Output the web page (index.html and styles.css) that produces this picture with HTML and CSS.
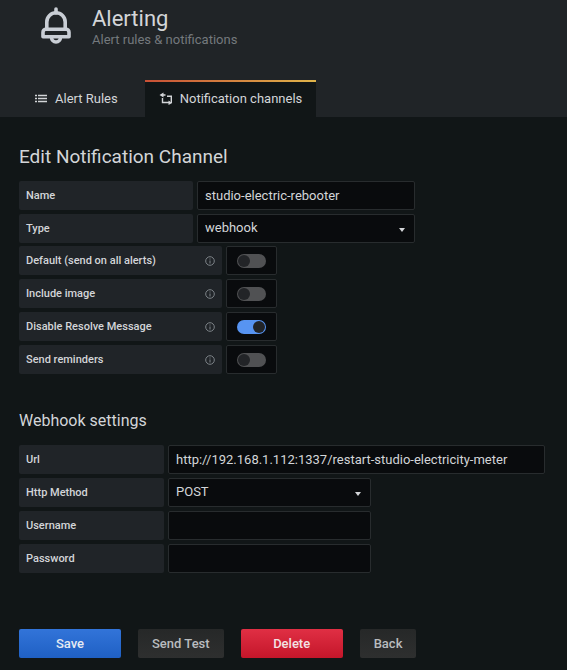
FILE: index.html
```html
<!DOCTYPE html>
<html lang="en">
<head>
    <meta charset="UTF-8">
    <meta name="viewport" content="width=device-width, initial-scale=1.0">
    <title>Alerting</title>
    <link rel="stylesheet" href="styles.css">
</head>
<body>
    <header class="page-header">
        <div class="page-title">
            <svg class="page-icon" viewBox="0 0 30 38" fill="none" stroke="currentColor" stroke-width="3.600" stroke-linejoin="round">
                <path d="M15 3v4" stroke-linecap="round"/>
                <path d="M5.800 23v-7a9.200 9.200 0 0 1 18.400 0v7"/>
                <path d="M5 23.200h20a3 3 0 0 1 3 3v4.600H2v-4.600a3 3 0 0 1 3-3z"/>
                <path d="M10.500 31a4.500 5 0 0 0 9 0"/>
            </svg>
            <div>
                <h1>Alerting</h1>
                <p>Alert rules &amp; notifications</p>
            </div>
        </div>
        <nav class="tabs">
            <a class="tab" href="#rules">
                <svg class="tab-icon" viewBox="0 0 14 14" fill="none" stroke="currentColor">
                    <path d="M1 3.500h2M1 6.500h2M1 9.500h2M4 3.500h9M4 6.500h9M4 9.500h9" stroke-width="1.300"/>
                </svg>
                Alert Rules
            </a>
            <a class="tab active" href="#channels">
                <svg class="tab-icon" viewBox="0 0 14 14" fill="none" stroke="currentColor" stroke-width="1.400">
                    <path d="M2 3h4.500M8 4.200h4.300V11M3.500 6v4.500H11"/>
                    <path d="M4.500.5v5L.5 3zM9.500 8.500v4.500l3.700-2z" fill="currentColor" stroke="none"/>
                </svg>
                Notification channels
            </a>
        </nav>
    </header>
    <main>
        <form action="#" method="post">
            <h2>Edit Notification Channel</h2>
            <div class="fields general">
                <div class="field">
                    <label for="name">Name</label>
                    <input type="text" id="name" name="name" value="studio-electric-rebooter">
                </div>
                <div class="field">
                    <label for="type">Type</label>
                    <select id="type" name="type">
                        <option>webhook</option>
                        <option>email</option>
                        <option>slack</option>
                    </select>
                </div>
            </div>
            <div class="fields switches">
                <div class="field">
                    <label for="default">Default (send on all alerts)
                        <svg class="info" viewBox="0 0 10 10" fill="none" stroke="currentColor"><circle cx="5" cy="5" r="4.300"/><path d="M5 4.500v3M5 2.500v1"/></svg>
                    </label>
                    <span class="switch"><input type="checkbox" id="default" name="default"></span>
                </div>
                <div class="field">
                    <label for="image">Include image
                        <svg class="info" viewBox="0 0 10 10" fill="none" stroke="currentColor"><circle cx="5" cy="5" r="4.300"/><path d="M5 4.500v3M5 2.500v1"/></svg>
                    </label>
                    <span class="switch"><input type="checkbox" id="image" name="image"></span>
                </div>
                <div class="field">
                    <label for="resolve">Disable Resolve Message
                        <svg class="info" viewBox="0 0 10 10" fill="none" stroke="currentColor"><circle cx="5" cy="5" r="4.300"/><path d="M5 4.500v3M5 2.500v1"/></svg>
                    </label>
                    <span class="switch"><input type="checkbox" id="resolve" name="resolve" checked></span>
                </div>
                <div class="field">
                    <label for="reminders">Send reminders
                        <svg class="info" viewBox="0 0 10 10" fill="none" stroke="currentColor"><circle cx="5" cy="5" r="4.300"/><path d="M5 4.500v3M5 2.500v1"/></svg>
                    </label>
                    <span class="switch"><input type="checkbox" id="reminders" name="reminders"></span>
                </div>
            </div>
            <h3>Webhook settings</h3>
            <div class="fields webhook">
                <div class="field">
                    <label for="url">Url</label>
                    <input class="wide" type="text" id="url" name="url" value="http://192.168.1.112:1337/restart-studio-electricity-meter">
                </div>
                <div class="field">
                    <label for="method">Http Method</label>
                    <select id="method" name="method">
                        <option>POST</option>
                        <option>PUT</option>
                    </select>
                </div>
                <div class="field">
                    <label for="username">Username</label>
                    <input type="text" id="username" name="username">
                </div>
                <div class="field">
                    <label for="password">Password</label>
                    <input type="password" id="password" name="password">
                </div>
            </div>
            <div class="buttons">
                <button class="btn primary" type="submit">Save</button>
                <button class="btn" type="button">Send Test</button>
                <button class="btn danger" type="button">Delete</button>
                <button class="btn" type="button">Back</button>
            </div>
        </form>
    </main>
</body>
</html>
```
FILE: styles.css
```css
* {
    box-sizing: border-box;
    margin: 0;
    padding: 0;
}
body {
    background: #111617;
    color: #d3d5d8;
    font-family: Roboto, "Liberation Sans", sans-serif;
    font-size: 13px;
}
.page-header {
    background: #202427;
}
.page-title {
    display: flex;
    gap: 21px;
    padding: 6px 20px 0 41px;
    height: 80px;
}
.page-icon {
    width: 30px;
    height: 38px;
    color: #c9ced5;
}
h1 {
    font-size: 22px;
    font-weight: 400;
    line-height: 26px;
}
.page-title p {
    color: #74797d;
    line-height: 16px;
}
.tabs {
    display: flex;
    padding-left: 20px;
}
.tab {
    display: flex;
    align-items: center;
    gap: 7px;
    height: 37px;
    padding: 0 14px 2px;
    border-top: 2px solid transparent;
    color: #d3d5d8;
    text-decoration: none;
}
.tab.active {
    margin-left: 13px;
    background: #111617;
    border-image: linear-gradient(to right, #c84f35, #e0b54a) 1;
    border-width: 2px 0 0;
}
.tab-icon {
    width: 14px;
    height: 14px;
}
main {
    padding: 28px 22px 11px 19px;
}
h2 {
    margin-bottom: 12px;
    font-size: 19px;
    font-weight: 400;
    line-height: 24px;
}
h3 {
    margin: 37px 0 14px;
    font-size: 16px;
    font-weight: 400;
    line-height: 20px;
}
.fields {
    display: flex;
    flex-direction: column;
    gap: 4px;
}
.switches {
    margin-top: 3px;
}
.field {
    display: flex;
    gap: 4px;
    height: 29px;
}
.field label {
    display: flex;
    align-items: center;
    justify-content: space-between;
    flex: none;
    width: 203px;
    padding: 0 7px;
    background: #202428;
    border-radius: 2px;
    font-size: 11px;
    font-weight: 500;
}
.general label {
    width: 174px;
}
.webhook label {
    width: 145px;
}
.info {
    width: 10px;
    height: 10px;
    color: #7d8388;
}
.field input[type="text"],
.field input[type="password"],
.field select {
    width: 203px;
    padding: 0 7px;
    background: #090b0d;
    border: 1px solid #282c2e;
    border-radius: 2px;
    color: #d3d5d8;
    font-family: inherit;
    font-size: 13px;
}
.general input[type="text"],
.general select {
    width: 218px;
}
.field input.wide {
    flex: 1;
}
.field select {
    appearance: none;
    padding-bottom: 2px;
    background: #090b0d url("data:image/svg+xml,%3Csvg xmlns='http://www.w3.org/2000/svg' viewBox='0 0 6 4'%3E%3Cpath d='M0 0h6L3 4z' fill='%23d3d5d8'/%3E%3C/svg%3E") no-repeat right 9px top 13px / 6px 4px;
}
.switch {
    display: flex;
    align-items: center;
    justify-content: center;
    width: 51px;
    background: #090b0d;
    border: 1px solid #282c2e;
    border-radius: 2px;
}
.switch input {
    display: flex;
    align-items: center;
    appearance: none;
    width: 29px;
    height: 14px;
    padding: 0 1px;
    background: #505153;
    border-radius: 7px;
}
.switch input::before {
    content: "";
    width: 12px;
    height: 12px;
    background: #222427;
    border-radius: 50%;
}
.switch input:checked {
    justify-content: flex-end;
    background: #5794f2;
}
.buttons {
    display: flex;
    gap: 17px;
    margin-top: 56px;
}
.btn {
    height: 29px;
    padding: 0 14px;
    background: linear-gradient(#262828, #2e2f2f);
    border: none;
    border-radius: 2px;
    color: #b9bcbf;
    font-family: inherit;
    font-size: 13px;
    font-weight: 500;
}
.primary {
    width: 102px;
    background: linear-gradient(#3274d9, #1f60c4);
    color: #e6ebf3;
}
.danger {
    width: 102px;
    background: linear-gradient(#e02f44, #c4162a);
    color: #f3e3e5;
}
```
